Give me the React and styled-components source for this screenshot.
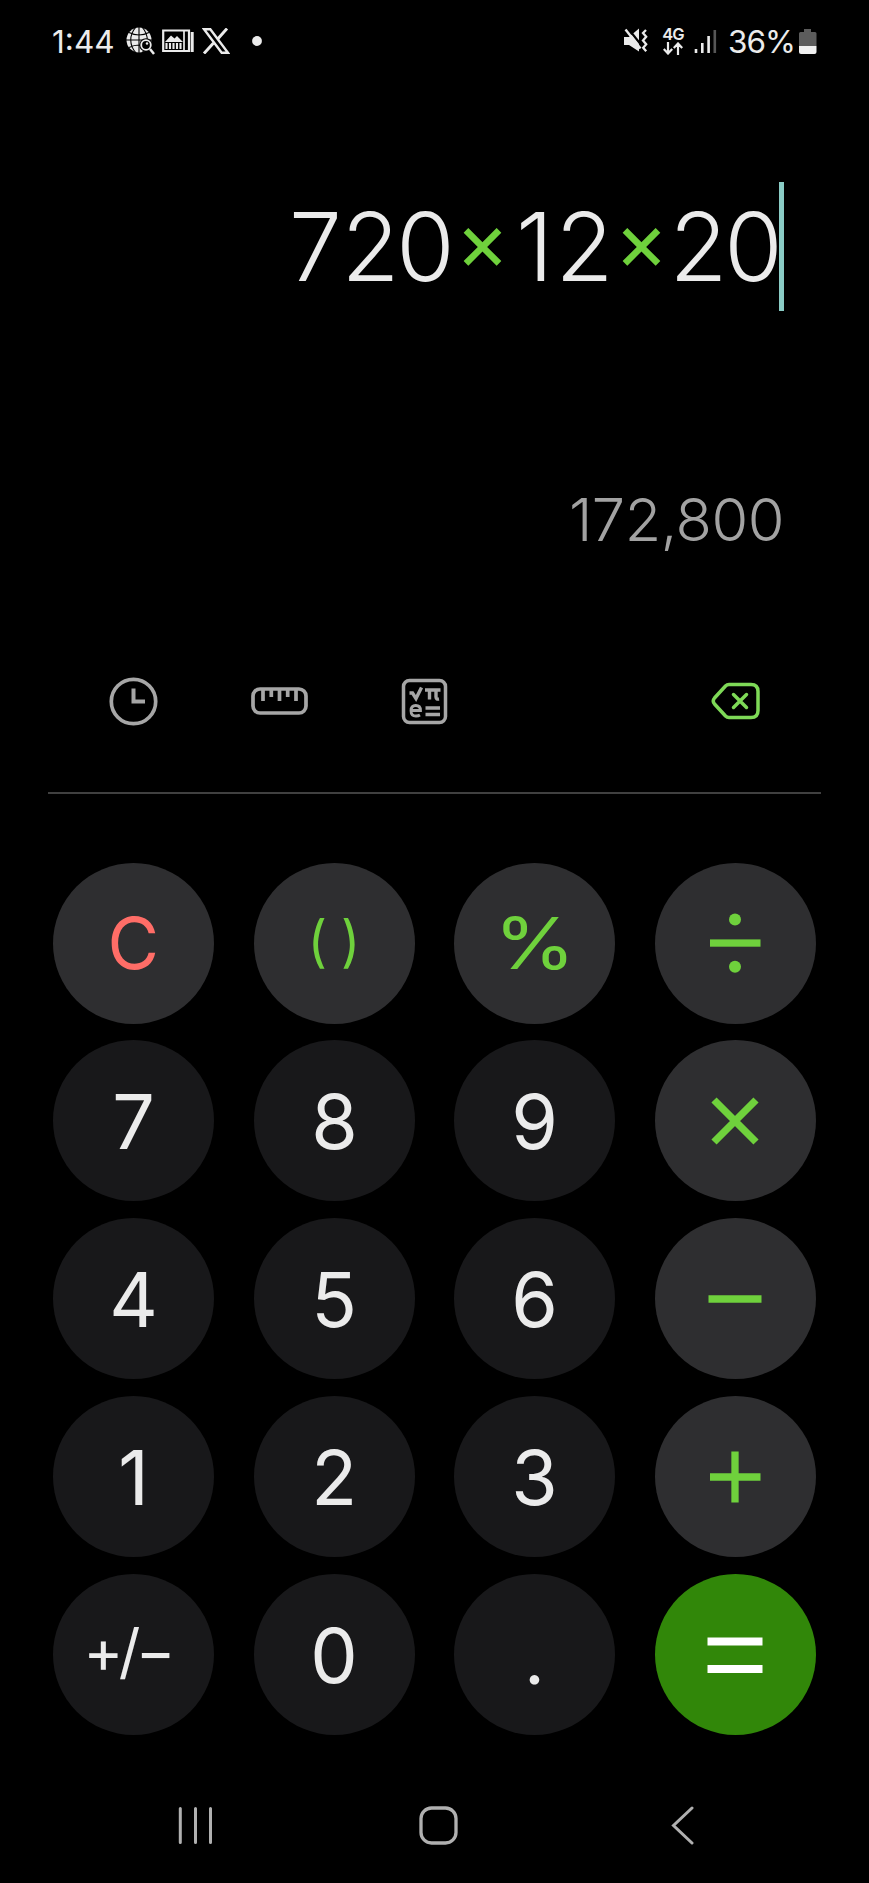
import React from 'react';
import styled, { createGlobalStyle } from 'styled-components';

const GREEN = '#6fd13c';
const INK = '#ebebeb';

const GlobalStyle = createGlobalStyle`
  * { box-sizing: border-box; }
  body { margin: 0; background: #000; }
`;

const Screen = styled.main`
  width: 869px;
  height: 1883px;
  display: flex;
  flex-direction: column;
  background: #000;
  color: ${INK};
  font-family: Inter, Roboto, sans-serif;
  overflow: hidden;
`;

const StatusBar = styled.header`
  height: 82px;
  padding: 0 52px 0 52px;
  display: flex;
  align-items: center;
  justify-content: space-between;
`;

const StatusGroup = styled.div`
  display: flex;
  align-items: center;
`;

const Clock = styled.span`
  width: 74px;
  font-size: 31.5px;
  line-height: 32px;
  padding-top: 1px;
`;

const Percent = styled.span`
  width: 71px;
  margin-left: 11px;
  padding-top: 1px;
  font-size: 31.5px;
  line-height: 32px;
  letter-spacing: -1px;
  white-space: nowrap;
`;

const Glyph = styled.svg`
  display: block;
  flex: none;
  margin-left: ${(p) => p.$ml || 0}px;
`;

const Network = styled.div`
  width: 22px;
  margin-left: 13px;
  display: flex;
  flex-direction: column;
  align-items: center;
  gap: 1px;
  font-size: 16.5px;
  font-weight: 600;
  line-height: 14px;
  letter-spacing: -0.8px;
`;

const Display = styled.section`
  height: 568px;
  padding: 100px 85px 0 0;
  display: flex;
  flex-direction: column;
  align-items: flex-end;
`;

const Expression = styled.div`
  height: 129px;
  display: flex;
  align-items: center;
  border-right: 5px solid #8accc5;
  font-size: 94.5px;
  font-weight: 365;
  line-height: 129px;
`;

const Digit = styled.span`
  width: ${(p) => (p.$one ? 45 : 55)}px;
  display: flex;
  justify-content: center;

  &:last-child {
    margin-right: -2px;
  }
`;

const Times = styled.span`
  width: 59px;
  display: flex;
  justify-content: center;
  padding-bottom: 12px;
  color: ${GREEN};
  font-size: 82px;
  font-weight: 400;
  line-height: 117px;
`;

const Result = styled.output`
  margin-top: 172px;
  font-size: 59.5px;
  font-weight: 350;
  line-height: 72px;
  letter-spacing: -0.5px;
  color: #a2a2a2;
`;

const Toolbar = styled.nav`
  height: 144px;
  margin: 0 48px;
  padding: 24px 61px 0 61px;
  display: flex;
  align-items: flex-start;
  border-bottom: 2px solid #404040;
  color: #a6a6a6;
`;

const Tool = styled.button`
  width: ${(p) => p.$w}px;
  height: 54px;
  margin-left: ${(p) => p.$ml || 0}px;
  padding: 0;
  display: grid;
  place-items: center;
  border: 0;
  background: none;
  color: ${(p) => (p.$accent ? '#7ed957' : 'inherit')};
`;

const Keypad = styled.section`
  margin: 68.5px 0 0 53.2px;
  display: grid;
  grid-template-columns: repeat(4, 161px);
  grid-auto-rows: 161px;
  column-gap: 39.45px;
  row-gap: 16.9px;
`;

const tones = {
  digit: ['#18181a', INK],
  operator: ['#2e2e30', GREEN],
  clear: ['#2e2e30', '#ff6d67'],
  equals: ['#318709', '#fff'],
};

const Key = styled.button`
  padding: 0;
  display: flex;
  align-items: center;
  justify-content: center;
  border: 0;
  border-radius: 50%;
  background: ${(p) => tones[p.$tone][0]};
  color: ${(p) => tones[p.$tone][1]};
  font-family: inherit;
  font-size: ${(p) => p.$size || 76}px;
  line-height: 160px;
`;

const Face = styled.span`
  display: block;
  transform: scaleX(${(p) => p.$x || 0.99});
`;

const Parens = styled(Face)`
  display: flex;
  gap: 15px;
  padding-bottom: 4px;
  line-height: 146px;
`;

const Sign = styled(Face)`
  padding: 0 13px 7px 0;
  letter-spacing: -4.6px;
  line-height: 150px;
  white-space: nowrap;
`;

const Point = styled.span`
  font-family: Lato, sans-serif;
`;

const NavBar = styled.footer`
  margin-top: 71px;
  padding-left: 178px;
  display: flex;
`;

const Line = ({ d, w = 7.3 }) => (
  <Glyph width="60" height="60" viewBox="-30 -30 60 60" stroke="currentColor" strokeWidth={w} fill="none">
    <path d={d} />
  </Glyph>
);

const keys = [
  ['clear', <Face $x={0.98}>C</Face>, 72],
  ['operator', <Parens $x={0.94}><span>(</span><span>)</span></Parens>, 56],
  ['operator', <Face $x={1.17}>%</Face>, 71],
  ['operator', (
    <Glyph width="60" height="60" viewBox="-30 -30 60 60" fill="currentColor">
      <rect x="-25" y="-3.6" width="50.5" height="7.3" />
      <circle cy="-23.5" r="6" />
      <circle cy="23.7" r="6" />
    </Glyph>
  )],
  ['digit', <Face>7</Face>],
  ['digit', <Face>8</Face>],
  ['digit', <Face>9</Face>],
  ['operator', <Line d="M-21-21 21 21M21-21-21 21" />],
  ['digit', <Face>4</Face>],
  ['digit', <Face>5</Face>],
  ['digit', <Face>6</Face>],
  ['operator', <Line d="M-26.500 0H26.500" />],
  ['digit', <Face>1</Face>],
  ['digit', <Face>2</Face>],
  ['digit', <Face>3</Face>],
  ['operator', <Line d="M-25 0H25.500M0-25.500V25.500" />],
  ['digit', <Sign $x={1}>+/−</Sign>, 60],
  ['digit', <Face>0</Face>],
  ['digit', <Point>.</Point>],
  ['equals', <Line w={8} d="M-27.500-13.500H27.500M-27.500 14H27.500" />],
];

export default function App() {
  return (
    <Screen>
      <GlobalStyle />
      <StatusBar>
        <StatusGroup>
          <Clock>1:44</Clock>
          <Glyph width="29" height="28" viewBox="0 0 29 28" fill="none">
            <circle cx="13" cy="13" r="12.500" fill={INK} />
            <path d="M13 0v26M0 13h26M3 5.500q10 5 20 0M3 20.500q10-5 20 0M10 0C3 8 3 18 10 26M16 0c7 8 7 18 0 26" stroke="#000" strokeWidth="1.100" />
            <circle cx="20" cy="18" r="6.800" fill="#000" />
            <circle cx="20" cy="18" r="4.800" fill="#000" stroke={INK} strokeWidth="1.800" />
            <path d="m24 22 4 5" stroke={INK} strokeWidth="2.500" />
            <circle cx="21" cy="16.500" r="1.200" fill={INK} />
          </Glyph>
          <Glyph $ml={7} width="32" height="24" viewBox="0 0 32 24" fill="none" stroke={INK}>
            <path d="M1.200 1.500H27V22H1.200Z" strokeWidth="2.200" />
            <path d="M22 1v21" strokeWidth="1.700" />
            <path d="M30.200 3v20" strokeWidth="3" />
            <path d="M3 13 9 6.500l3.500 3 2.500-2.500 6 6Z" fill={INK} stroke="none" />
            <path d="M4.500 14v6M8 14v6M11.500 14v6M15 14v6M18.500 14v6" strokeWidth="2.100" />
          </Glyph>
          <Glyph $ml={8} width="28" height="26" viewBox="0 0 28 26" fill="none" stroke={INK}>
            <path d="M2 1.200H8.300L26 24.800H19.700Z" strokeWidth="2.400" />
            <path d="M25 .5 15.500 11.200M11.500 15 2 25.500" strokeWidth="2.900" />
          </Glyph>
          <Glyph $ml={22} width="10" height="10" viewBox="0 0 10 10">
            <circle cx="5" cy="5" r="4.900" fill={INK} />
          </Glyph>
        </StatusGroup>
        <StatusGroup>
          <Glyph width="25" height="26" viewBox="0 0 25 26" fill={INK}>
            <path d="M0 9h5l10-8.500v23L5 17H0Z" />
            <path d="M2.500-1.500 18 18" stroke="#000" strokeWidth="2.200" />
            <path d="M1.500 1.500 16.500 20.500" stroke={INK} strokeWidth="2.400" />
            <path d="m22 2-3 3 3.200 3.800L19 12.500l3.200 3.800-3 3.500 3 3.500" fill="none" stroke={INK} strokeWidth="2.300" />
          </Glyph>
          <Network>
            4G
            <svg width="20" height="13" viewBox="0 0 20 13" fill="none" stroke={INK} strokeWidth="2.200">
              <path d="M5 0v11M.8 7 5 11.500 9.200 7M15 13V2M10.800 6 15 1.500 19.200 6" />
            </svg>
          </Network>
          <Glyph $ml={10} width="23" height="25" viewBox="0 0 23 25" strokeWidth="2.600" stroke={INK}>
            <path d="M2 20v4M8.300 14v10M14.600 7v17" />
            <path d="M20.800 1v23" stroke="#565656" />
          </Glyph>
          <Percent>36%</Percent>
          <Glyph width="18" height="25" viewBox="0 0 18 25">
            <path d="M5 0h7v3h4q1.500 0 1.500 1.500V17H0V4.500Q0 3 1.500 3H5Z" fill="#5c5c5c" />
            <path d="M0 17h17.500v6q0 2-2 2H2q-2 0-2-2Z" fill="#f0f0f0" />
          </Glyph>
        </StatusGroup>
      </StatusBar>

      <Display>
        <Expression>
          {[...'720×12×20'].map((c, i) =>
            c === '×' ? <Times key={i}>{c}</Times> : <Digit key={i} $one={c === '1'}>{c}</Digit>
          )}
        </Expression>
        <Result>172,800</Result>
      </Display>

      <Toolbar>
        <Tool $w={49} aria-label="History">
          <svg width="49" height="49" viewBox="0 0 49 49" fill="none" stroke="currentColor" strokeWidth="3.700">
            <circle cx="24.500" cy="24.500" r="22.200" />
            <path d="M24.500 11.500V24.500H36" strokeWidth="4" />
          </svg>
        </Tool>
        <Tool $w={57} $ml={93} aria-label="Unit converter">
          <svg width="57" height="28" viewBox="0 0 57 28" fill="none" stroke="currentColor" strokeWidth="3.700">
            <rect x="2" y="2" width="53" height="24" rx="7" />
            <path d="M12 2v12M20.300 2v8M28.500 2v12M36.700 2v8M45 2v12" />
          </svg>
        </Tool>
        <Tool $w={47} $ml={93} aria-label="Scientific mode">
          <svg width="47" height="47" viewBox="0 0 47 47" fill="none" stroke="currentColor" strokeWidth="3.500">
            <rect x="2.500" y="2.500" width="42" height="42" rx="6" />
            <path d="M8.500 15h3l3.500 5.500L20.500 9.500M24 12h15.500M28.500 12v9.500M35 12v7q0 2.500 3 2M24.500 30H39M24.500 36.500H39" strokeWidth="3.400" />
            <path d="M11 32.500h8.500q0-5-4.800-5-4.700 0-4.700 5.200 0 5.300 5 5.300 2.500 0 4-1" strokeWidth="2.800" />
          </svg>
        </Tool>
        <Tool $w={49} $ml={263} $accent aria-label="Delete">
          <svg width="49" height="38" viewBox="0 0 49 38" fill="none" stroke="currentColor" strokeWidth="3.500" strokeLinecap="round" strokeLinejoin="round">
            <path d="M18 2.500H40Q47 2.500 47 9.500V28.500Q47 35.500 40 35.500H18Q16 35.500 14.500 34L3.500 22Q1 19 3.500 16L14.500 4Q16 2.500 18 2.500Z" />
            <path d="m22.500 12.500 13 13m0-13-13 13" />
          </svg>
        </Tool>
      </Toolbar>

      <Keypad>
        {keys.map(([tone, face, size], i) => (
          <Key key={i} $tone={tone} $size={size}>{face}</Key>
        ))}
      </Keypad>

      <NavBar>
        <svg width="35" height="39" viewBox="0 0 35 39" stroke="#b0b0b0" strokeWidth="3" strokeLinecap="round">
          <path d="M2.300 2.500v34M17.500 2.500v34M32.500 2.500v34" />
        </svg>
        <Glyph $ml={206} width="39" height="39" viewBox="0 0 39 39" fill="none" stroke="#b0b0b0" strokeWidth="3.300">
          <rect x="2" y="2" width="35" height="35" rx="10.500" />
        </Glyph>
        <Glyph $ml={213} width="24" height="39" viewBox="0 0 24 39" fill="none" stroke="#b0b0b0" strokeWidth="3" strokeLinecap="round">
          <path d="M21 2 2.500 19.500 21 37" />
        </Glyph>
      </NavBar>
    </Screen>
  );
}
